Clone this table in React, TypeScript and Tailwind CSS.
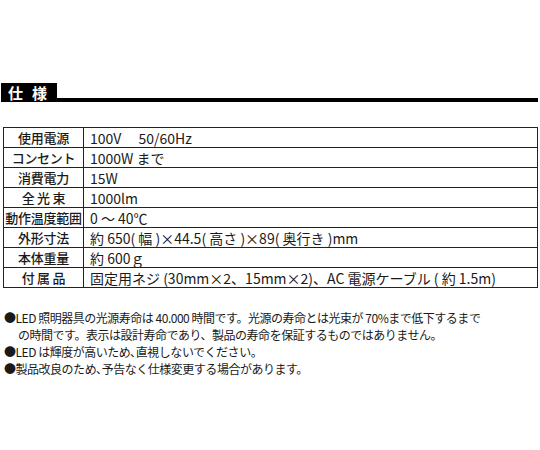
import React from 'react';

const rows: [string, string][] = [
  ['使用電源', '100V　 50/60Hz'],
  ['コンセント', '1000W まで'],
  ['消費電力', '15W'],
  ['全 光 束', '1000lm'],
  ['動作温度範囲', '0 ～ 40℃'],
  ['外形寸法', '約 650( 幅 )×44.5( 高さ )×89( 奥行き )mm'],
  ['本体重量', '約 600ｇ'],
  ['付 属 品', '固定用ネジ (30mm×2、15mm×2)、AC 電源ケーブル ( 約 1.5m)'],
];

export default function App() {
  return (
    <div
      className="w-[540px] h-[450px] bg-white text-[#1a1a1a] overflow-hidden"
      style={{ fontFamily: '"Noto Sans CJK JP", "Noto Sans", sans-serif' }}
    >
      {/* title */}
      <div className="pt-[83px] pl-[1px] pr-[2px] flex items-end">
        <div className="w-[56px] h-[19px] bg-black text-white text-[15px] font-bold leading-[19px] pl-[7px] tracking-[0.6em]">
          仕様
        </div>
        <div className="flex-1 h-[4px] bg-black" />
      </div>

      {/* spec table */}
      <table className="mt-[25px] ml-[3px] w-[535px] border-collapse leading-none">
        <tbody>
          {rows.map(([k, v]) => (
            <tr key={k} className="h-[20px]">
              <td className="w-[80px] border border-[#222] text-center text-[13px] font-medium whitespace-nowrap tracking-[-0.02em]">
                {k}
              </td>
              <td className="border border-[#222] pl-[6px] text-[14px] whitespace-nowrap">{v}</td>
            </tr>
          ))}
        </tbody>
      </table>

      {/* notes */}
      <div className="mt-[21px] pl-[4px] text-[12px] leading-[17px] tracking-[-0.04em] whitespace-nowrap">
        <div>●LED 照明器具の光源寿命は 40.000 時間です。光源の寿命とは光束が 70%まで低下するまで</div>
        <div className="pl-[14px]">の時間です。表示は設計寿命であり、製品の寿命を保証するものではありません。</div>
        <div>●LED は輝度が高いため､直視しないでください。</div>
        <div>●製品改良のため､予告なく仕様変更する場合があります。</div>
      </div>
    </div>
  );
}
